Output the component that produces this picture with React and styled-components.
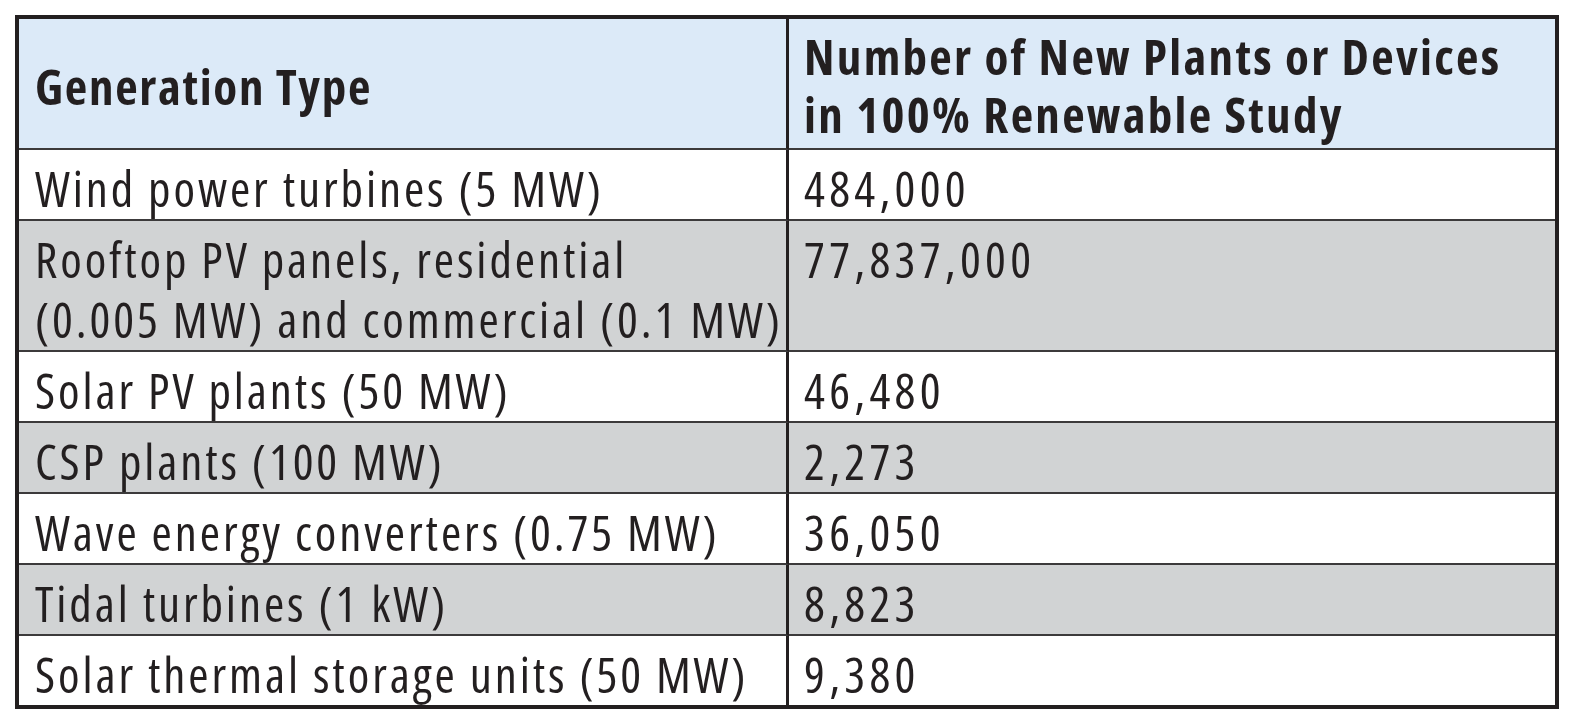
import React from 'react'
import styled, { createGlobalStyle } from 'styled-components'

const GlobalStyle = createGlobalStyle`
  body {
    margin: 0;
    background: #ffffff;
    font-family: "Open Sans", "Noto Sans", sans-serif;
    color: #231f20;
  }
`

const rows = [
  { type: 'Wind power turbines (5 MW)', count: '484,000' },
  { type: ['Rooftop PV panels, residential', '(0.005 MW) and commercial (0.1 MW)'], count: '77,837,000' },
  { type: 'Solar PV plants (50 MW)', count: '46,480' },
  { type: 'CSP plants (100 MW)', count: '2,273' },
  { type: 'Wave energy converters (0.75 MW)', count: '36,050' },
  { type: 'Tidal turbines (1 kW)', count: '8,823' },
  { type: 'Solar thermal storage units (50 MW)', count: '9,380' },
]

function App() {
  return (
    <Page>
      <GlobalStyle />
      <Table>
        <colgroup>
          <FirstCol />
          <SecondCol />
        </colgroup>
        <thead>
          <tr>
            <HeadCell $first>Generation Type</HeadCell>
            <HeadCell>
              Number of New Plants or Devices
              <br />
              in 100% Renewable Study
            </HeadCell>
          </tr>
        </thead>
        <tbody>
          {rows.map((row, i) => (
            <Row key={i} $shaded={i % 2 === 1}>
              <Cell $first $last={i === rows.length - 1}>
                {Array.isArray(row.type)
                  ? row.type.map((line, j) => <div key={j}>{line}</div>)
                  : row.type}
              </Cell>
              <Cell $number $last={i === rows.length - 1}>{row.count}</Cell>
            </Row>
          ))}
        </tbody>
      </Table>
    </Page>
  )
}

const Page = styled.div`
  padding: 15px 0 0 15px;
`

const Table = styled.table`
  width: 1544px;
  table-layout: fixed;
  border-collapse: separate;
  border-spacing: 0;
  border: 4px solid #231f20;
  font-size: 49px;
  font-stretch: condensed;
`

const FirstCol = styled.col`
  width: 770px;
`

const SecondCol = styled.col`
  width: 766px;
`

const HeadCell = styled.th`
  background: #dceaf8;
  padding: ${({ $first }) => ($first ? '5px 16px 0' : '8px 15px 5px')};
  text-align: left;
  vertical-align: ${({ $first }) => ($first ? 'middle' : 'top')};
  font-weight: 700;
  line-height: 58px;
  letter-spacing: ${({ $first }) => ($first ? '1.7px' : '2.3px')};
  white-space: nowrap;
  border-bottom: 2px solid #3c3a3b;
  border-right: ${({ $first }) => ($first ? '3px solid #231f20' : 'none')};
`

const Row = styled.tr`
  background: ${({ $shaded }) => ($shaded ? '#d1d3d4' : '#ffffff')};
`

const Cell = styled.td`
  padding: 8px ${({ $first }) => ($first ? '16px' : '15px')} 1px;
  vertical-align: top;
  line-height: 60px;
  font-weight: 400;
  letter-spacing: ${({ $number }) => ($number ? '4.3px' : '2.9px')};
  white-space: nowrap;
  border-bottom: ${({ $last }) => ($last ? 'none' : '2px solid #3c3a3b')};
  border-right: ${({ $first }) => ($first ? '3px solid #231f20' : 'none')};
`

export default App
